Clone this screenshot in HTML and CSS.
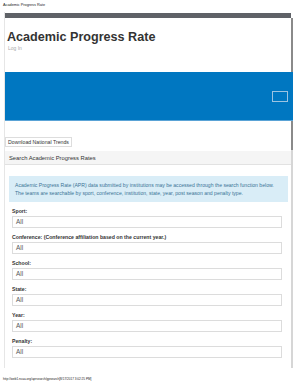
FILE: index.html
```html
<!DOCTYPE html>
<html lang="en">
<head>
    <meta charset="UTF-8">
    <meta name="viewport" content="width=device-width, initial-scale=1.0">
    <title>Academic Progress Rate</title>
    <link rel="stylesheet" href="styles.css">
</head>
<body>
    <div class="print-head">Academic Progress Rate</div>

    <div class="frame">
        <div class="scrollbar"><div class="thumb"></div></div>

        <div class="topbar"></div>

        <div class="masthead">
            <h1>Academic Progress Rate</h1>
            <a class="login" href="#">Log In</a>
        </div>

        <div class="hero">
            <div class="menu-toggle"></div>
        </div>

        <div class="actions">
            <button class="btn">Download National Trends</button>
        </div>

        <div class="panel">
            <div class="panel-heading">Search Academic Progress Rates</div>
            <div class="panel-body">
                <div class="info">
                    Academic Progress Rate (APR) data submitted by institutions may be accessed through the search function below.<br>
                    The teams are searchable by sport, conference, institution, state, year, post season and penalty type.
                </div>

                <div class="field">
                    <label>Sport:</label>
                    <div class="select">All</div>
                </div>
                <div class="field">
                    <label>Conference: (Conference affiliation based on the current year.)</label>
                    <div class="select">All</div>
                </div>
                <div class="field">
                    <label>School:</label>
                    <div class="select">All</div>
                </div>
                <div class="field">
                    <label>State:</label>
                    <div class="select">All</div>
                </div>
                <div class="field">
                    <label>Year:</label>
                    <div class="select">All</div>
                </div>
                <div class="field">
                    <label>Penalty:</label>
                    <div class="select">All</div>
                </div>
            </div>
        </div>
    </div>

    <div class="print-foot">http://web1.ncaa.org/aprsearch/gpsearch[8/17/2017 3:02:25 PM]</div>
</body>
</html>
```

FILE: styles.css
```css
body {
    margin: 0;
    width: 298px;
    font-family: 'Liberation Sans', Arial, sans-serif;
    color: #333;
    background: #fff;
}
.print-head {
    height: 12px;
    line-height: 10px;
    padding-left: 3px;
    font-size: 3.8px;
    color: #222;
}
.frame {
    position: relative;
    margin-left: 4px;
    width: 288px;
    padding-top: 1px;
    border-left: 1px solid #e6e6e6;
}
.scrollbar {
    position: absolute;
    top: 6px;
    right: 0;
    width: 2px;
    height: 350px;
    background: #d6d6d6;
}
.thumb {
    height: 132px;
    background: #8a8a8a;
}
.topbar {
    height: 5px;
    margin-right: 2px;
    background: #5f6267;
}
.masthead {
    height: 54px;
    padding-left: 2px;
}
.masthead h1 {
    margin: 0;
    padding-top: 12px;
    font-size: 12.6px;
    line-height: 15px;
    font-weight: bold;
    color: #333;
}
.login {
    display: block;
    padding-left: 1px;
    font-size: 5px;
    line-height: 7px;
    color: #aaa;
    text-decoration: none;
}
.hero {
    position: relative;
    z-index: 1;
    height: 48px;
    background: #0077c1;
    border-bottom: 1px solid #5aa3d6;
    display: flex;
    justify-content: flex-end;
    align-items: flex-start;
    padding-right: 5px;
}
.menu-toggle {
    margin-top: 19px;
    width: 14px;
    height: 9px;
    border: 1px solid #9cc4e2;
}
.actions {
    padding: 16px 0 4px 0;
}
.btn {
    display: block;
    height: 10px;
    width: 67px;
    padding: 0;
    font-family: 'Liberation Sans', Arial, sans-serif;
    font-size: 5.2px;
    color: #333;
    background: #fff;
    border: 1px solid #ddd;
}
.panel {
    padding-right: 2px;
}
.panel-heading {
    height: 13px;
    line-height: 14px;
    padding-left: 4px;
    font-size: 5.8px;
    color: #333;
    background: #f5f5f5;
    border-bottom: 1px solid #e2e2e2;
}
.panel-body {
    padding: 11px 3px 5px 4px;
}
.info {
    height: 16px;
    padding: 5px 6px;
    font-size: 5.1px;
    line-height: 8px;
    color: #3b7396;
    background: #d9edf7;
    margin-bottom: 5px;
    white-space: nowrap;
    overflow: hidden;
}
.field {
    padding: 0 6px 0 3px;
    margin-bottom: 5px;
}
.field label {
    display: block;
    height: 9px;
    line-height: 9px;
    font-size: 5.2px;
    font-weight: bold;
    color: #333;
}
.select {
    height: 10px;
    line-height: 10px;
    padding-left: 3px;
    font-size: 6.4px;
    color: #555;
    border: 1px solid #dcdcdc;
}
.print-foot {
    padding: 7px 0 0 3px;
    font-size: 3.1px;
    line-height: 8px;
    color: #222;
}
```
